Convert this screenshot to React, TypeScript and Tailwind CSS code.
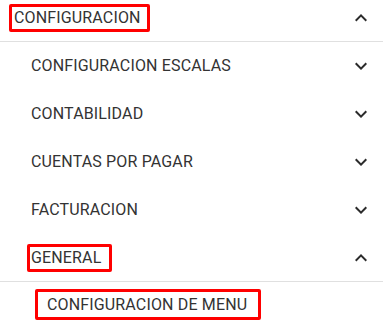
const ExpandMore = () => (
  <svg viewBox="0 0 24 24" className="w-6 h-6 shrink-0" fill="#2b2b2b">
    <path d="M16.59 8.59L12 13.17 7.41 8.59 6 10l6 6 6-6z" />
  </svg>
);

const ExpandLess = () => (
  <svg viewBox="0 0 24 24" className="w-6 h-6 shrink-0" fill="#2b2b2b">
    <path d="M12 8l-6 6 1.41 1.41L12 10.83l4.59 4.58L18 14z" />
  </svg>
);

const CHILDREN = ["CONFIGURACION ESCALAS", "CONTABILIDAD", "CUENTAS POR PAGAR", "FACTURACION"];

export default function App() {
  return (
    <div
      className="w-[383px] h-[328px] overflow-hidden bg-white text-[#333333] text-[16px] tracking-[0.15px]"
      style={{ fontFamily: "Roboto, 'Liberation Sans', sans-serif" }}
    >
      <div className="-mt-[6px]">
        {/* Top level */}
        <div className="flex items-center justify-between h-12 pl-[14px] pr-[10px] border-b border-[#e0e0e0]">
          <span className="-ml-[5px] border-[3px] border-[#ff0000] rounded-[2px] pl-[2px] pr-[6px] leading-[22px]">
            CONFIGURACION
          </span>
          <ExpandLess />
        </div>

        {CHILDREN.map((label) => (
          <div key={label} className="flex items-center justify-between h-12 pl-[31px] pr-[10px]">
            <span className="leading-[22px]">{label}</span>
            <ExpandMore />
          </div>
        ))}

        <div className="flex items-center justify-between h-12 pl-[31px] pr-[10px] border-b border-[#e0e0e0]">
          <span className="-ml-[4px] border-[3px] border-[#ff0000] rounded-[2px] pl-[1px] pr-[8px] leading-[22px]">
            GENERAL
          </span>
          <ExpandLess />
        </div>

        {/* Third level */}
        <div className="flex items-center h-12 pl-[47px] pr-[10px]">
          <span className="-ml-[12px] -mt-[3px] border-[3px] border-[#ff0000] rounded-[2px] pl-[9px] pr-[11px] leading-[25px]">
            CONFIGURACION DE MENU
          </span>
        </div>
      </div>
    </div>
  );
}
